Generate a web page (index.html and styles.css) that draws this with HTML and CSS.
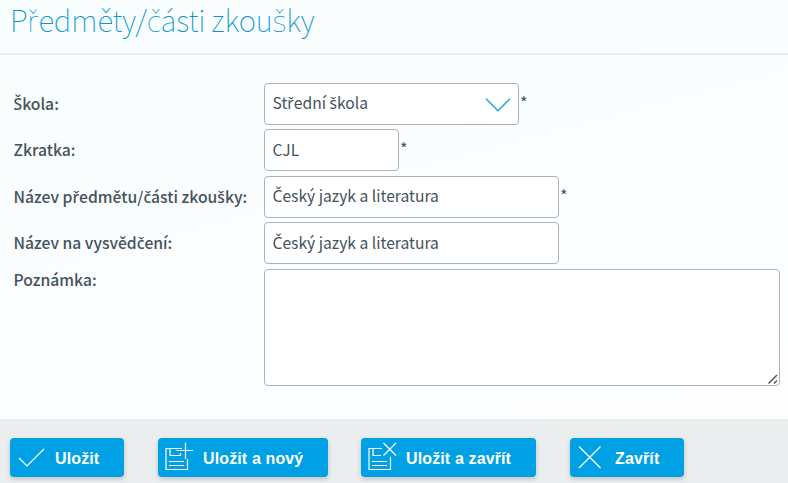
FILE: index.html
```html
<!DOCTYPE html>
<html lang="cs">
<head>
<meta charset="utf-8">
<title>Předměty/části zkoušky</title>
<link rel="stylesheet" href="styles.css">
</head>
<body>
<header class="page-header"><h1>P<i>ř</i>edměty/<i>č</i>ásti zkou<i>š</i>ky</h1></header>
<main class="form">
  <div class="row">
    <span class="label"><i>Š</i>kola:</span>
    <div class="field select"><span>St<i>ř</i>ední <i>š</i>kola</span><svg width="26" height="14" viewBox="0 0 26 14"><path d="M1 .8 13 12.8 25 .8"/></svg></div>
    <span class="required">*</span>
  </div>
  <div class="row">
    <span class="label">Zkratka:</span>
    <div class="field short"><span>CJL</span></div>
    <span class="required">*</span>
  </div>
  <div class="row">
    <span class="label">Název p<i>ř</i>edmětu/<i>č</i>ásti zkou<i>š</i>ky:</span>
    <div class="field wide"><span><i>Č</i>eský jazyk a literatura</span></div>
    <span class="required">*</span>
  </div>
  <div class="row">
    <span class="label">Název na vysvěd<i>č</i>ení:</span>
    <div class="field wide"><span><i>Č</i>eský jazyk a literatura</span></div>
  </div>
  <div class="row note">
    <span class="label">Poznámka:</span>
    <div class="field area"><svg width="10" height="10" viewBox="0 0 10 10"><path d="M.5 9.5 9 1M6 9.5 9 6.5"/></svg></div>
  </div>
</main>
<footer class="actions">
  <button class="btn save"><svg width="30" height="31" viewBox="0 0 30 31"><path d="M3 16 11 24 28 7"/></svg><span>Uložit</span></button>
  <button class="btn save-new"><svg width="30" height="31" viewBox="0 0 30 31"><path d="M18 6.500H2V27.500H23.500V17M6 6.500V13.500H16.500V11M5 19.500H20M5 23.500H20M21.500 .5V17M12.500 8.500H29"/></svg><span>Uložit a nový</span></button>
  <button class="btn save-close"><svg width="30" height="31" viewBox="0 0 30 31"><path d="M15 6.500H2V27.500H23.500V15M6 6.500V13.500H14M5 19.500H20M5 23.500H20M16.500 1 29 13.500M29 1 16.500 13.500"/></svg><span>Uložit a zavřít</span></button>
  <button class="btn close"><svg width="30" height="31" viewBox="0 0 30 31"><path d="M3 4.500 24.500 26M24.500 4.500 3 26"/></svg><span>Zavřít</span></button>
</footer>
</body>
</html>
```
FILE: styles.css
```css
* { box-sizing: border-box; }
body {
  margin: 0;
  height: 483px;
  overflow: hidden;
  display: flex;
  flex-direction: column;
  background: linear-gradient(165deg, #f8fdfe, #fbfdfe 45%, #fdfdfe);
  color: #44525b;
  font-family: "Noto Sans CJK JP", "Open Sans", sans-serif;
}
i {
  font-family: "Noto Sans", "Open Sans", sans-serif;
  font-style: normal;
  line-height: 1;
}
.page-header {
  height: 55px;
  flex: none;
  padding-left: 10px;
  border-bottom: 2px solid #e9eeef;
}
h1 {
  margin: 0;
  color: #0a95cf;
  font-size: 29.5px;
  font-weight: 100;
  letter-spacing: -.13px;
  line-height: 38px;
  white-space: nowrap;
}
.form { height: 364px; flex: none; padding: 28px 8px 0 13px; }
.row { display: flex; height: 46.4px; }
.label {
  width: 251px;
  flex: none;
  padding-left: .5px;
  font-size: 15.7px;
  font-weight: 500;
  line-height: 42px;
  white-space: nowrap;
}
.field {
  display: flex;
  height: 42px;
  padding: 0 7px 2px 7.5px;
  align-items: center;
  border: 1px solid #a9b5bd;
  border-radius: 4px;
  background: #fff;
  font-size: 15.65px;
  white-space: nowrap;
}
.select { width: 255px; padding-bottom: 3px; justify-content: space-between; }
.select svg { margin-top: 5px; }
.short { width: 135px; }
.wide { width: 295px; }
.required { padding-left: 1px; font-size: 16px; line-height: 39px; }
.note { height: 117px; }
.note .label { line-height: 21px; }
.area { width: 516px; height: 117px; padding: 0 1px 1px; align-items: flex-end; justify-content: flex-end; }
svg { flex: none; fill: none; stroke: #fff; stroke-width: 1.2; }
.select svg { stroke: #20a6e0; stroke-width: 1.5; }
.area svg { stroke: #555; stroke-width: 1.5; }
.actions {
  flex: 1;
  display: flex;
  align-items: flex-start;
  padding: 19px 10px 0;
  background: #eaeeef;
}
.btn {
  display: flex;
  height: 39px;
  padding: 0 0 0 6px;
  align-items: center;
  border: 0;
  border-radius: 4px;
  background: #00a1e4;
  box-shadow: 0 2px 5px rgba(0, 0, 0, .18);
  color: #fff;
  font: bold 16px "Liberation Sans", sans-serif;
  letter-spacing: .13px;
  white-space: nowrap;
}
.btn span { margin: 2px 0 0 9px; }
.save { width: 114px; }
.save-new { width: 170px; margin-left: 34px; }
.save-close { width: 175px; margin-left: 33px; }
.close { width: 114px; margin-left: 34px; }
```
